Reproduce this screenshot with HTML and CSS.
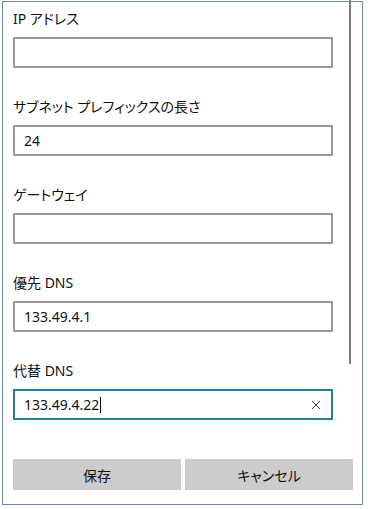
FILE: index.html
```html
<!doctype html>
<html lang="ja">
    <head>
        <meta charset="UTF-8" />
        <meta name="viewport" content="width=device-width, initial-scale=1.0" />
        <title>IP 設定の編集</title>
        <link rel="stylesheet" href="styles.css">
    </head>
    <body>
        <div class="window">
            <div class="scroll-thumb"></div>

            <div class="field">
                <div class="label">IP アドレス</div>
                <div class="box"></div>
            </div>

            <div class="field">
                <div class="label">サブネット プレフィックスの長さ</div>
                <div class="box"><span class="value">24</span></div>
            </div>

            <div class="field">
                <div class="label">ゲートウェイ</div>
                <div class="box"></div>
            </div>

            <div class="field">
                <div class="label">優先 DNS</div>
                <div class="box"><span class="value">133.49.4.1</span></div>
            </div>

            <div class="field">
                <div class="label">代替 DNS</div>
                <div class="box focused">
                    <span class="value">133.49.4.22</span>
                    <span class="caret"></span>
                    <svg class="clear" width="10" height="10" viewBox="0 0 10 10">
                        <path d="M1 1 L9 9 M9 1 L1 9" stroke="#444" stroke-width="1" fill="none" />
                    </svg>
                </div>
            </div>

            <div class="buttons">
                <button class="btn">保存</button>
                <button class="btn">キャンセル</button>
            </div>
        </div>
    </body>
</html>
```

FILE: styles.css
```css
body {
    margin: 0;
    background-color: #ffffff;
    color: #111111;
    font-family: "Noto Sans", "Noto Sans CJK JP", sans-serif;
    font-size: 14px;
    /* proportional kana, closer to Yu Gothic UI */
    font-feature-settings: "palt";
}

.window {
    position: relative;
    box-sizing: border-box;
    width: 361px;
    height: 504px;
    margin: 1px 0 0 2px;
    padding: 7px 0 0 10px;
    border: 1px solid #7089a6;
}

/* thin overlay scrollbar on the right */
.scroll-thumb {
    position: absolute;
    left: 346px;
    top: -2px;
    width: 2px;
    height: 364px;
    background-color: #7d7d7d;
}

.field {
    margin-bottom: 29px;
}

.label {
    height: 20px;
    line-height: 20px;
    margin-bottom: 8px;
}

.box {
    box-sizing: border-box;
    display: flex;
    align-items: center;
    width: 320px;
    height: 31px;
    padding: 0 9px;
    border: 2px solid #999999;
    background-color: #ffffff;
}

.box.focused {
    border-color: #2b7b9b;
}

.value {
    line-height: 20px;
}

.caret {
    width: 1px;
    height: 16px;
    margin-left: 1px;
    background-color: #000000;
}

.clear {
    margin-left: auto;
    margin-right: 1px;
}

.buttons {
    display: grid;
    grid-template-columns: 1fr 1fr;
    gap: 4px;
    width: 340px;
    margin-top: 39px;
}

.btn {
    height: 31px;
    border: none;
    background-color: #cccccc;
    color: #111111;
    font-family: inherit;
    font-size: 14px;
    font-feature-settings: "palt";
    padding: 0;
}
```
